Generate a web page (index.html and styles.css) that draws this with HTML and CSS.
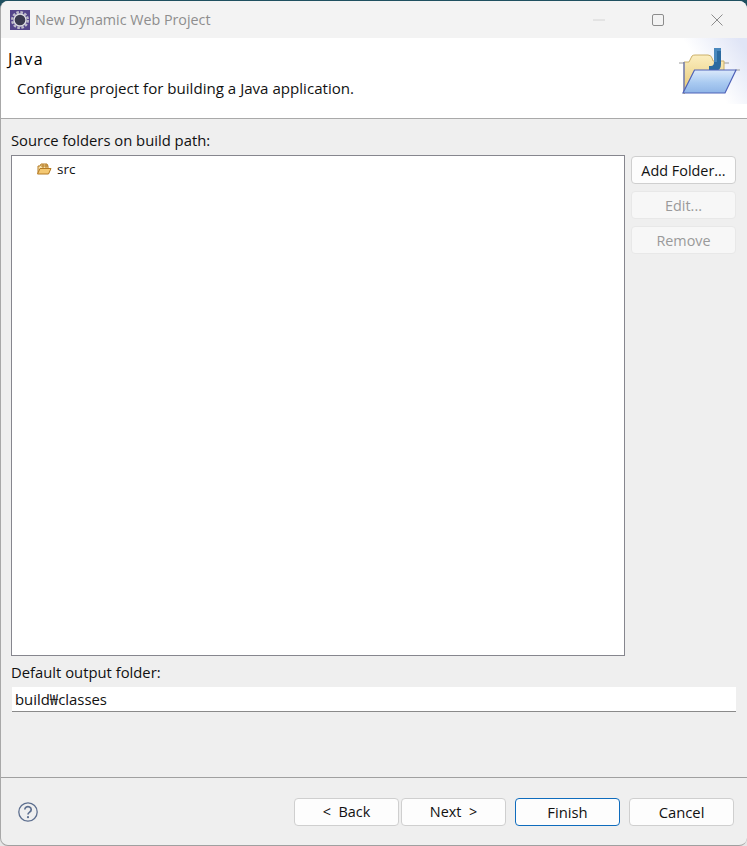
FILE: index.html
```html
<!DOCTYPE html>
<html lang="en">
<head>
<meta charset="utf-8">
<title>New Dynamic Web Project</title>
<link rel="stylesheet" href="styles.css">
</head>
<body>
<div class="window">
  <header class="titlebar">
    <svg class="app-icon" width="20" height="20" viewBox="0 0 20 20">
      <rect width="20" height="20" fill="#54458a"/>
      <circle cx="10" cy="10" r="7.800" fill="none" stroke="#bdbbc8" stroke-width="2.400" stroke-dasharray="2.600 1.500"/>
      <circle cx="10" cy="10" r="6" fill="#3a3a4e" stroke="#dcdbe2" stroke-width="1.400"/>
    </svg>
    <span class="title">New Dynamic Web Project</span>
    <div class="controls">
      <svg class="ctl" width="12" height="12" viewBox="0 0 12 12"><path d="M0 6h12" stroke="#d4d4d4" stroke-width="1"/></svg>
      <svg class="ctl" width="12" height="12" viewBox="0 0 12 12"><rect x="0.5" y="0.5" width="11" height="11" rx="1.500" fill="none" stroke="#8c8c8c"/></svg>
      <svg class="ctl" width="12" height="12" viewBox="0 0 12 12"><path d="M0.5 0.5l11 11M11.500 0.5l-11 11" stroke="#8c8c8c" stroke-width="1"/></svg>
    </div>
  </header>
  <section class="banner">
    <div class="banner-text">
      <h1 class="banner-title">Java</h1>
      <p class="banner-desc">Configure project for building a Java application.</p>
    </div>
    <div class="banner-art">
      <svg width="75" height="66" viewBox="0 0 75 66">
        <defs>
          <linearGradient id="bg" x1="0" y1="0.8" x2="1" y2="0.2"><stop offset="0.45" stop-color="#ffffff"/><stop offset="1" stop-color="#e0e5f6"/></linearGradient>
          <linearGradient id="back" x1="0" y1="0" x2="0" y2="1"><stop offset="0" stop-color="#fbeec0"/><stop offset="1" stop-color="#e6c670"/></linearGradient>
          <linearGradient id="front" x1="0" y1="0" x2="0" y2="1"><stop offset="0" stop-color="#dbe9fb"/><stop offset="0.55" stop-color="#a9caf1"/><stop offset="1" stop-color="#8fb5e7"/></linearGradient>
        </defs>
        <rect width="75" height="66" fill="url(#bg)"/>
        <path d="M7 25h5M50 25h7M63 32h5" stroke="#9c9c9c" stroke-width="1.200" fill="none"/>
        <path d="M12 56V24h5l3-6q1-1 3-1h13q3 0 4 3l1 3h11v10H24z" fill="url(#back)" stroke="#cbb06a" stroke-width="1"/>
        <path d="M12 24V55" stroke="#5b6fbf" stroke-width="1.200"/>
        <path d="M37 33v-5h2q3 0 3-4V10h7v16q0 7-6 7z" fill="#2c6aa0"/>
        <path d="M42 10h7v3h-4v11h-3z" fill="#4a88bd"/>
        <path d="M22.500 32H64L53 55H11z" fill="url(#front)" stroke="#4f62b8" stroke-width="1.200"/>
      </svg>
    </div>
  </section>
  <main class="content">
    <label class="field-label label-source">Source folders on build path:</label>
    <div class="source-row">
      <div class="tree">
        <div class="tree-item">
          <svg width="16" height="16" viewBox="0 0 16 16">
            <path d="M2 12V5h2l1-2h6l1 2v2" fill="#f6e3ae" stroke="#b57a22"/>
            <path d="M7 3v4M10 3v4M5 5h7" stroke="#b57a22" fill="none"/>
            <path d="M1.500 13 4 7.500h11L12.500 13z" fill="#f4c872" stroke="#b57a22"/>
          </svg>
          <span class="tree-text">src</span>
        </div>
      </div>
      <div class="side-buttons">
        <button class="btn">Add Folder...</button>
        <button class="btn is-disabled" disabled>Edit...</button>
        <button class="btn is-disabled" disabled>Remove</button>
      </div>
    </div>
    <label class="field-label output-label">Default output folder:</label>
    <div class="text-input">build₩classes</div>
  </main>
  <footer class="footer">
    <svg class="help" width="20" height="20" viewBox="0 0 20 20">
      <circle cx="10" cy="10" r="9.200" fill="none" stroke="#5d6f8f" stroke-width="1.300"/>
      <path d="M6.800 7.600a3.200 3 0 1 1 4.900 2.500c-1.100.7-1.700 1.300-1.700 2.500" fill="none" stroke="#5d6f8f" stroke-width="1.700"/>
      <circle cx="10" cy="15.200" r="1.100" fill="#5d6f8f"/>
    </svg>
    <div class="actions">
      <div class="nav-pair">
        <button class="btn btn-nav">&lt;&nbsp; Back</button>
        <button class="btn btn-nav">Next &nbsp;&gt;</button>
      </div>
      <button class="btn btn-wide is-default">Finish</button>
      <button class="btn btn-wide">Cancel</button>
    </div>
  </footer>
</div>
</body>
</html>
```

FILE: styles.css
```css
* { box-sizing: border-box; }
html, body { margin: 0; height: 100%; }
body {
  width: 747px;
  height: 846px;
  overflow: hidden;
  padding-top: 1px;
  background: linear-gradient(#1f5060 0, #1f5060 20px, #e6e6e6 20px);
  font-family: "Open Sans", "Noto Sans CJK KR", sans-serif;
  font-size: 14px;
  color: #111;
}
.window {
  width: 747px;
  height: 845px;
  display: flex;
  flex-direction: column;
  background: #efefef;
  border-left: 1px solid #a8a8a8;
  border-bottom: 1px solid #a0a0a0;
  border-radius: 8px;
  overflow: hidden;
}
.titlebar {
  height: 37px;
  flex: none;
  display: flex;
  align-items: center;
  padding-left: 9px;
  background: #f3f3f3;
}
.app-icon { flex: none; }
.title {
  margin-left: 5px;
  font-size: 14.300px;
  color: #8e8e8e;
}
.controls {
  margin-left: auto;
  display: flex;
  align-items: center;
  gap: 47px;
  padding-right: 24px;
}
.banner {
  height: 81px;
  flex: none;
  display: flex;
  justify-content: space-between;
  background: #fff;
  border-bottom: 1px solid #a9a9a9;
}
.banner-title {
  margin: 0;
  padding: 11px 0 0 7px;
  font-size: 16px;
  line-height: 20px;
  font-weight: 500;
  letter-spacing: 1.500px;
  color: #000;
}
.banner-desc {
  margin: 0;
  padding: 9px 0 0 16px;
  font-size: 15.100px;
  line-height: 20px;
}
.banner-art { flex: none; height: 66px; }
.banner-art svg { display: block; }
.content {
  flex: none;
  height: 659px;
  padding: 11px 10px 0;
  display: flex;
  flex-direction: column;
  border-bottom: 1px solid #a0a0a0;
}
.field-label {
  height: 20px;
  line-height: 20px;
  font-size: 14.800px;
}
.source-row {
  margin-top: 5px;
  height: 501px;
  flex: none;
  display: flex;
  gap: 6px;
}
.tree {
  width: 614px;
  flex: none;
  background: #fff;
  border: 1px solid #86868e;
  padding: 5px 0 0 24px;
}
.tree-item {
  display: flex;
  align-items: center;
  gap: 5px;
  height: 16px;
  line-height: 16px;
}
.tree-text { font-size: 13.500px; }
.side-buttons {
  padding-top: 1px;
  display: flex;
  flex-direction: column;
  gap: 7px;
}
.btn {
  width: 105px;
  height: 28px;
  padding: 0;
  font: inherit;
  font-size: 14.400px;
  color: #111;
  background: #fdfdfd;
  border: 1px solid #cfcfcf;
  border-radius: 4px;
}
.btn.btn-wide { font-size: 14.800px; }
.btn.btn-nav { font-size: 14.400px; }
.btn.is-disabled {
  color: #9a9a9a;
  background: #f7f7f7;
  border-color: #e8e8e8;
}
.btn.is-default { border-color: #0f6cbd; }
.output-label { margin-top: 6px; }
.text-input {
  margin: 5px 0 0 1px;
  height: 25px;
  width: 724px;
  padding: 1px 0 0 3px;
  line-height: 23px;
  font-size: 14.900px;
  background: #fff;
  border-bottom: 1px solid #8a8a8a;
}
.footer {
  flex: 1;
  display: flex;
  align-items: center;
  justify-content: space-between;
  padding: 0 13px 0 17px;
}
.actions {
  display: flex;
  gap: 9px;
}
.nav-pair {
  display: flex;
  gap: 2px;
}
```
